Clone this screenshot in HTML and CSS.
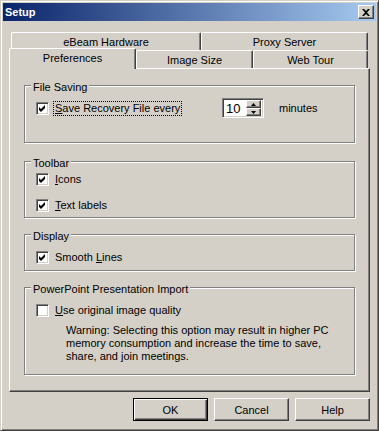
FILE: index.html
```html
<!DOCTYPE html>
<html lang="en">
<head>
  <meta charset="UTF-8" />
  <title>Setup</title>
  <link rel="stylesheet" href="styles.css">
</head>
<body>
  <div class="window">
    <div class="titlebar">
      <span class="title">Setup</span>
      <button class="close-btn" aria-label="Close">
        <svg width="8" height="7" viewBox="0 0 8 7"><path d="M0 0h2l2 2 2-2h2L5 3.5 8 7H6L4 5 2 7H0l3-3.5z" fill="#000"/></svg>
      </button>
    </div>

    <div class="body">
      <div class="tabs">
        <div class="tab-row back">
          <div class="tab t-ebeam">eBeam Hardware</div>
          <div class="tab t-proxy">Proxy Server</div>
        </div>
        <div class="tab-row front">
          <div class="tab t-pref selected">Preferences</div>
          <div class="tab t-image">Image Size</div>
          <div class="tab t-web">Web Tour</div>
        </div>
      </div>

      <div class="panel">
        <div class="group g-file">
          <div class="group-title">File Saving</div>
          <div class="row file-row">
            <div class="check-item">
              <span class="check checked"><svg width="7" height="7" viewBox="0 0 7 7"><path d="M0 2l2 2 4-4v3l-4 4-2-2z" fill="#000"/></svg></span>
              <span class="label focused"><u>S</u>ave Recovery File every</span>
            </div>
            <div class="spin">
              <span class="spin-value">10</span>
              <div class="spin-btns">
                <span class="spin-btn"><svg width="5" height="3" viewBox="0 0 5 3"><path d="M2.5 0L5 3H0z" fill="#000"/></svg></span>
                <span class="spin-btn"><svg width="5" height="3" viewBox="0 0 5 3"><path d="M0 0h5L2.5 3z" fill="#000"/></svg></span>
              </div>
            </div>
            <span class="unit">minutes</span>
          </div>
        </div>

        <div class="group g-toolbar">
          <div class="group-title">Toolbar</div>
          <div class="row check-row r-icons">
            <span class="check checked"><svg width="7" height="7" viewBox="0 0 7 7"><path d="M0 2l2 2 4-4v3l-4 4-2-2z" fill="#000"/></svg></span>
            <span class="label"><u>I</u>cons</span>
          </div>
          <div class="row check-row r-labels">
            <span class="check checked"><svg width="7" height="7" viewBox="0 0 7 7"><path d="M0 2l2 2 4-4v3l-4 4-2-2z" fill="#000"/></svg></span>
            <span class="label"><u>T</u>ext labels</span>
          </div>
        </div>

        <div class="group g-display">
          <div class="group-title">Display</div>
          <div class="row check-row r-smooth">
            <span class="check checked"><svg width="7" height="7" viewBox="0 0 7 7"><path d="M0 2l2 2 4-4v3l-4 4-2-2z" fill="#000"/></svg></span>
            <span class="label">Smooth <u>L</u>ines</span>
          </div>
        </div>

        <div class="group g-ppt">
          <div class="group-title">PowerPoint Presentation Import</div>
          <div class="row check-row r-quality">
            <span class="check"></span>
            <span class="label"><u>U</u>se original image quality</span>
          </div>
          <p class="warning">Warning: Selecting this option may result in higher PC memory consumption and increase the time to save, share, and join meetings.</p>
        </div>
      </div>

      <div class="buttons">
        <button class="btn default">OK</button>
        <button class="btn">Cancel</button>
        <button class="btn">Help</button>
      </div>
    </div>
  </div>
</body>
</html>
```

FILE: styles.css
```css
body {
  margin: 0;
  font-family: "Liberation Sans", Arial, sans-serif;
  font-size: 11px;
  color: #000;
  background: #d4d0c8;
}
.window {
  width: 379px;
  height: 431px;
  box-sizing: border-box;
  padding: 2px;
  background: #d4d0c8;
  border: 1px solid;
  border-color: #d4d0c8 #404040 #404040 #d4d0c8;
  box-shadow: inset 1px 1px #fff, inset -1px -1px #808080;
}
.titlebar {
  height: 18px;
  display: flex;
  align-items: center;
  justify-content: space-between;
  padding: 0 2px;
  background: linear-gradient(to right, #0a246a, #a6caf0);
}
.title {
  color: #fff;
  font-weight: bold;
  font-size: 11px;
}
.close-btn {
  width: 16px;
  height: 14px;
  padding: 0;
  display: flex;
  align-items: center;
  justify-content: center;
  background: #d4d0c8;
  border: 1px solid;
  border-color: #fff #404040 #404040 #fff;
  box-shadow: inset -1px -1px #808080;
}
.body {
  padding: 0 6px;
}

/* tabs */
.tabs {
  margin-top: 11px;
}
.tab-row {
  display: flex;
  align-items: flex-end;
  height: 18px;
}
.tab-row.back {
  margin-left: 2px;
}
.tab {
  height: 18px;
  box-sizing: border-box;
  display: flex;
  align-items: center;
  justify-content: center;
  border: 1px solid;
  border-bottom: none;
  border-color: #fff #404040 #fff #fff;
  border-radius: 2px 2px 0 0;
  box-shadow: inset -1px 0 #808080;
  background: #d4d0c8;
}
.t-ebeam { width: 190px; }
.t-proxy { width: 167px; }
.t-pref { width: 127px; }
.t-image { width: 117px; }
.t-web { width: 115px; }
.tab.selected {
  height: 21px;
  margin-top: -2px;
  margin-bottom: -1px;
  padding-bottom: 3px;
  position: relative;
  z-index: 1;
}

/* main panel */
.panel {
  height: 324px;
  box-sizing: border-box;
  padding: 0 14px;
  border: 1px solid;
  border-color: #fff #404040 #404040 #fff;
  box-shadow: inset -1px -1px #808080;
}
.group {
  box-sizing: border-box;
  border: 1px solid #808080;
  box-shadow: 1px 1px 0 #fff, inset 1px 1px 0 #fff;
}
.group-title {
  width: fit-content;
  margin: -5px 0 0 6px;
  padding: 0 2px;
  line-height: 13px;
  background: #d4d0c8;
}
.g-file { margin-top: 16px; height: 58px; }
.g-toolbar { margin-top: 18px; height: 57px; }
.g-display { margin-top: 16px; height: 37px; }
.g-ppt { margin-top: 16px; height: 88px; }

.row {
  display: flex;
  align-items: center;
  padding-left: 11px;
}
.check-row {
  height: 15px;
}
.file-row { margin-top: 4px; height: 20px; }
.r-icons { margin-top: 2px; }
.r-labels { margin-top: 11px; }
.r-smooth { margin-top: 7px; }
.r-quality { margin-top: 7px; }

.check-item {
  display: flex;
  align-items: center;
  width: 186px;
}
.check {
  width: 13px;
  height: 13px;
  box-sizing: border-box;
  display: flex;
  align-items: center;
  justify-content: center;
  background: #fff;
  border: 1px solid;
  border-color: #808080 #fff #fff #808080;
  box-shadow: inset 1px 1px #404040, inset -1px -1px #d4d0c8;
}
.label {
  margin-left: 4px;
  padding: 0 1px;
  line-height: 13px;
  border: 1px solid transparent;
}
.label.focused {
  border: 1px dotted #000;
}

/* spin box */
.spin {
  width: 42px;
  height: 20px;
  box-sizing: border-box;
  display: flex;
  align-items: center;
  justify-content: space-between;
  padding: 1px 2px 1px 3px;
  background: #fff;
  border: 1px solid;
  border-color: #808080 #fff #fff #808080;
  box-shadow: inset 1px 1px #404040, inset -1px -1px #d4d0c8;
  font-size: 13px;
}
.spin-btns {
  display: flex;
  flex-direction: column;
}
.spin-btn {
  width: 15px;
  height: 8px;
  box-sizing: border-box;
  display: flex;
  align-items: center;
  justify-content: center;
  background: #d4d0c8;
  border: 1px solid;
  border-color: #fff #404040 #404040 #fff;
  box-shadow: inset -1px -1px #808080;
}
.unit {
  margin-left: 15px;
}

.warning {
  margin: 6px 0 0 41px;
  width: 270px;
  line-height: 13px;
}

/* dialog buttons */
.buttons {
  display: flex;
  justify-content: flex-end;
  gap: 6px;
  margin-top: 6px;
}
.btn {
  width: 75px;
  height: 23px;
  padding: 0;
  font-family: "Liberation Sans", Arial, sans-serif;
  font-size: 11px;
  color: #000;
  background: #d4d0c8;
  border: 1px solid;
  border-color: #fff #404040 #404040 #fff;
  box-shadow: inset -1px -1px #808080;
}
.btn.default {
  border-color: #000;
  box-shadow: inset 1px 1px #fff, inset -1px -1px #404040, inset -2px -2px #808080;
}
```
